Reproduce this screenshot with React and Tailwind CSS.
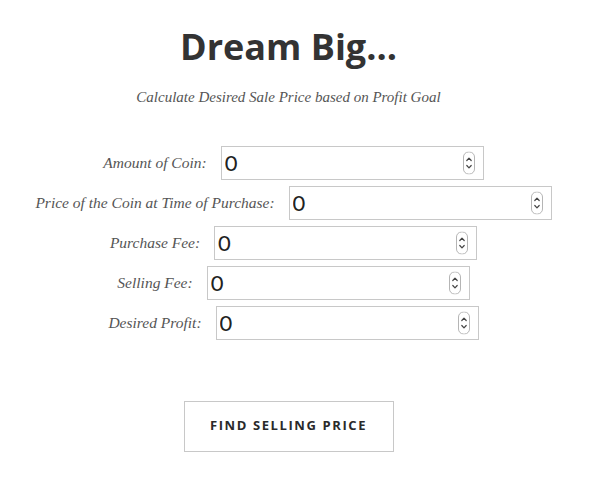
import { useState } from "react";

const fields = [
  { name: "amount", label: "Amount of Coin:" },
  { name: "buyPrice", label: "Price of the Coin at Time of Purchase:" },
  { name: "buyFee", label: "Purchase Fee:" },
  { name: "sellFee", label: "Selling Fee:" },
  { name: "profit", label: "Desired Profit:" },
];

const Spinner = () => (
  <svg
    width="12"
    height="23"
    viewBox="0 0 12 23"
    fill="none"
    className="absolute right-[9px] top-1/2 -translate-y-1/2 pointer-events-none"
  >
    <rect x="0.5" y="0.5" width="11" height="22" rx="5" stroke="#b5b5b5" fill="#fff" />
    <path d="M3.8 9 L6 6.6 L8.2 9" stroke="#444" strokeWidth="1.2" strokeLinecap="round" strokeLinejoin="round" />
    <path d="M3.8 14 L6 16.4 L8.2 14" stroke="#444" strokeWidth="1.2" strokeLinecap="round" strokeLinejoin="round" />
  </svg>
);

const App = () => {
  const [values, setValues] = useState({
    amount: "0",
    buyPrice: "0",
    buyFee: "0",
    sellFee: "0",
    profit: "0",
  });

  const handleChange = (e) => {
    setValues({ ...values, [e.target.name]: e.target.value });
  };

  return (
    <div className="w-[577px] bg-white min-h-[493px] pt-[19px]">
      <h1 className="text-center text-[36px] leading-[56px] font-bold text-[#333] font-['Open_Sans',sans-serif]">
        Dream Big...
      </h1>
      <p className="mt-[11px] text-center text-[15px] italic text-[#555] font-['Liberation_Serif',serif]">
        Calculate Desired Sale Price based on Profit Goal
      </p>

      <form className="mt-[37px] flex flex-col gap-[6px] pl-[10px]">
        {fields.map((f) => (
          <div key={f.name} className="flex items-center justify-center">
            <label className="mr-[14px] text-[15.5px] italic text-[#555] font-['Liberation_Serif',serif]">
              {f.label}
            </label>
            <div className="relative">
              <input
                name={f.name}
                value={values[f.name]}
                onChange={handleChange}
                className="w-[263px] h-[34px] border border-[#c8c8c8] pl-[3px] pr-6 text-[22px] text-[#222] font-['Lato',sans-serif] outline-none"
              />
              <Spinner />
            </div>
          </div>
        ))}
      </form>

      <div className="mt-[61px] flex justify-center">
        <button
          type="button"
          className="w-[210px] h-[51px] border border-[#c8c8c8] bg-white text-[13px] font-bold tracking-[1.6px] uppercase text-[#2a2a2a] font-['Open_Sans',sans-serif]"
        >
          Find Selling Price
        </button>
      </div>
    </div>
  );
};

export default App;
